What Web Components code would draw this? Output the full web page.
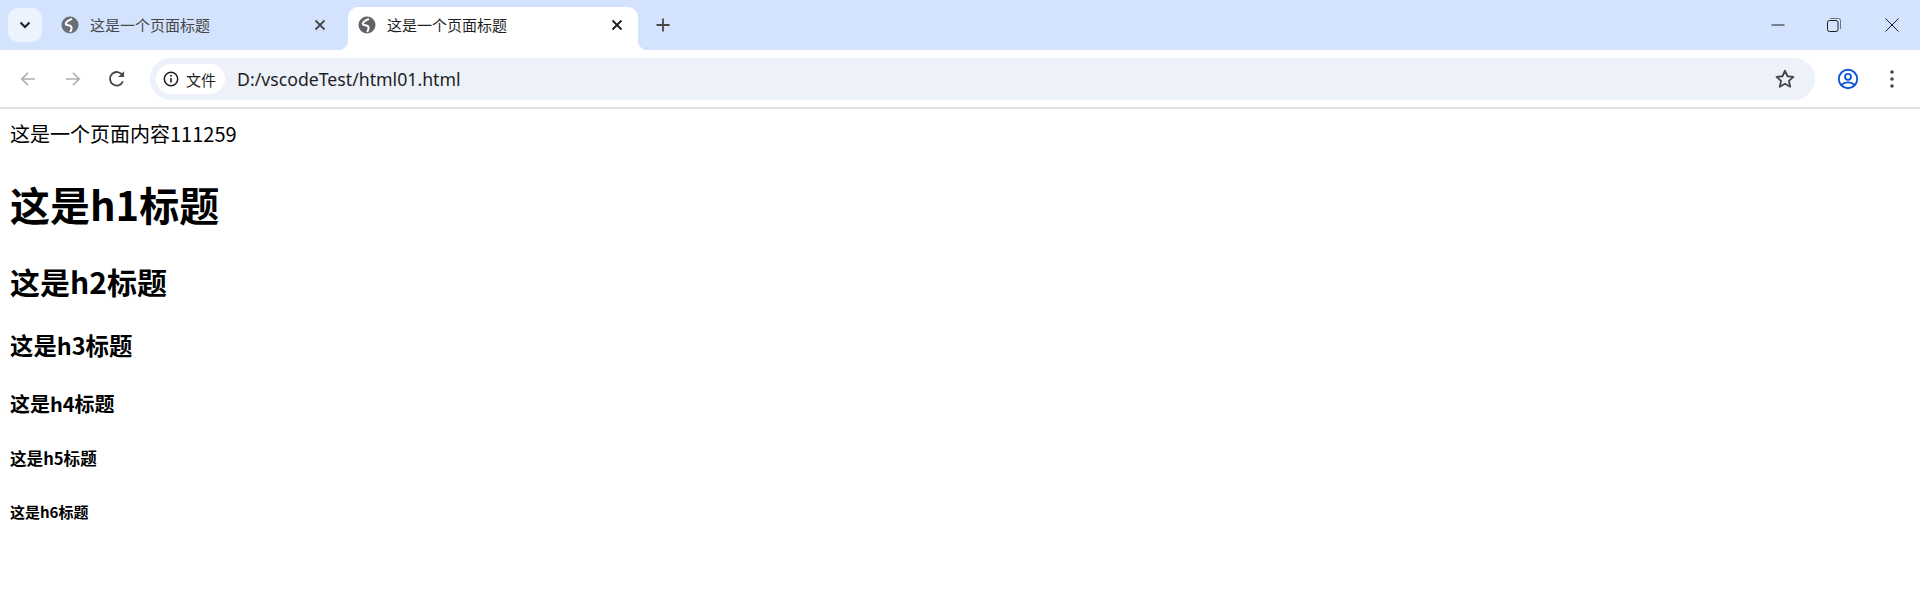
<!DOCTYPE html>
<html lang="zh">
<head>
<meta charset="utf-8">
<title>这是一个页面标题</title>
<style>
  html, body { margin: 0; height: 100%; background: #fff; overflow: hidden; }
  body { font-family: "Noto Sans CJK SC", "Noto Sans", sans-serif; }
</style>
</head>
<body>
<browser-window>
  <tab-strip>
    <browser-tab>这是一个页面标题</browser-tab>
    <browser-tab active>这是一个页面标题</browser-tab>
  </tab-strip>
  <nav-toolbar url="D:/vscodeTest/html01.html"></nav-toolbar>
  <page-view>
    <text-line>这是一个页面内容111259</text-line>
    <page-heading level="1">这是h1标题</page-heading>
    <page-heading level="2">这是h2标题</page-heading>
    <page-heading level="3">这是h3标题</page-heading>
    <page-heading level="4">这是h4标题</page-heading>
    <page-heading level="5">这是h5标题</page-heading>
    <page-heading level="6">这是h6标题</page-heading>
  </page-view>
</browser-window>

<script>
const GLOBE = `<svg width="18" height="18" viewBox="0 0 18 18"><circle cx="9" cy="9" r="8.500" fill="currentColor"/><path d="M11 2.800C8.500 4 5.500 5 4.800 7.300 4.300 9.300 7 9 9.500 10c2 1 1 4-.5 6" fill="none" stroke="#fff" stroke-width="2"/></svg>`;

class BrowserWindow extends HTMLElement {
  constructor() {
    super();
    this.attachShadow({ mode: "open" });
    this.shadowRoot.innerHTML = `
      <style>
        :host { display: flex; flex-direction: column; height: 606px; background: #fff; }
      </style>
      <slot></slot>`;
  }
}

class TabStrip extends HTMLElement {
  constructor() {
    super();
    this.attachShadow({ mode: "open" });
    this.shadowRoot.innerHTML = `
      <style>
        :host { display: flex; align-items: flex-end; height: 50px; background: #d3e3fd; color: #1f1f1f; flex: none; }
        .search { flex: none; width: 34px; height: 34px; margin: 0 0 8px 8px; border-radius: 10px; background: #ecf2fe; display: flex; align-items: center; justify-content: center; }
        .tabs { display: flex; align-items: flex-end; }
        .new { flex: none; width: 28px; height: 28px; margin: 0 0 11px 10.500px; display: flex; align-items: center; justify-content: center; }
        .spacer { flex: 1; }
        .ctl { flex: none; width: 56px; height: 50px; display: flex; align-items: center; justify-content: center; padding-bottom: 1px; box-sizing: border-box; }
        .ctls { display: flex; margin-right: .5px; }
        .ctls .ctl:last-child { margin-left: 2px; }
      </style>
      <div class="search">
        <svg width="12" height="8" viewBox="0 0 12 8"><path d="M1.500 1.500 6 6l4.500-4.500" fill="none" stroke="#1f1f1f" stroke-width="2"/></svg>
      </div>
      <div class="tabs"><slot></slot></div>
      <div class="new">
        <svg width="14" height="14" viewBox="0 0 14 14"><path d="M7 .5v13M.5 7h13" stroke="#474747" stroke-width="1.800"/></svg>
      </div>
      <div class="spacer"></div>
      <div class="ctls">
        <div class="ctl"><svg width="14" height="2" viewBox="0 0 14 2"><path d="M.5 1h13" stroke="#1f1f1f" stroke-width="1"/></svg></div>
        <div class="ctl"><svg width="14" height="14" viewBox="0 0 14 14"><rect x=".5" y="2.500" width="10.500" height="11" rx="2" fill="none" stroke="#1f1f1f"/><path d="M3 .5h8.500a2 2 0 0 1 2 2V11" fill="none" stroke="#6b7280"/></svg></div>
        <div class="ctl"><svg width="14" height="14" viewBox="0 0 14 14"><path d="M.5.5l13 13M13.500.5l-13 13" stroke="#1f1f1f" stroke-width="1"/></svg></div>
      </div>`;
  }
}

class BrowserTab extends HTMLElement {
  constructor() {
    super();
    this.attachShadow({ mode: "open" });
    this.shadowRoot.innerHTML = `
      <style>
        :host { display: flex; align-items: center; position: relative; width: 298px; height: 43px; padding: 0 14px 7px 19px; box-sizing: border-box; font-size: 15px; color: #474747; }
        :host([active]) { background: #fff; color: #1f1f1f; border-radius: 10px 10px 0 0; width: 290px; margin-left: 8px; padding: 0 15px 7px 10px; }
        .fav { flex: none; display: flex; color: #6a6f76; margin-right: 11px; }
        :host([active]) .fav { color: #5f6368; }
        .title { flex: 1; white-space: nowrap; overflow: hidden; line-height: 20px; }
        .close { flex: none; display: flex; }
        .curve { display: none; position: absolute; bottom: 0; width: 10px; height: 10px; }
        :host([active]) .curve { display: block; }
        .curve.l { left: -10px; background: radial-gradient(circle at 0 0, transparent 10px, #fff 10.500px); }
        .curve.r { right: -10px; background: radial-gradient(circle at 100% 0, transparent 10px, #fff 10.500px); }
      </style>
      <span class="fav">${GLOBE}</span>
      <span class="title"><slot></slot></span>
      <span class="close"><svg width="12" height="12" viewBox="0 0 12 12"><path d="M1.500 1.500l9 9M10.500 1.500l-9 9" stroke="currentColor" stroke-width="1.800"/></svg></span>
      <i class="curve l"></i><i class="curve r"></i>`;
  }
}

class NavToolbar extends HTMLElement {
  constructor() {
    super();
    this.attachShadow({ mode: "open" });
  }

  connectedCallback() {
    const url = this.getAttribute("url");
    this.shadowRoot.innerHTML = `
      <style>
        :host { display: flex; align-items: center; flex: none; height: 58px; background: #fff; border-radius: 10px 10px 0 0; box-sizing: border-box; padding: 0 0 1px 0; position: relative; }
        :host::before { content: ""; position: absolute; z-index: -1; inset: 0 0 50% 0; background: #d3e3fd; }
        :host::after { content: ""; position: absolute; left: 0; right: 0; bottom: -1px; height: 2px; background: #e1e1e1; }
        .btn { flex: none; width: 44.500px; height: 36px; display: flex; align-items: center; justify-content: center; }
        .navs { display: flex; margin-left: 6px; margin-right: 10.500px; }
        .omni { flex: 1; height: 42px; margin: 1px 0 0 0; background: #ecf1fa; border-radius: 21px; display: flex; align-items: center; padding: 0 19px 0 6px; box-sizing: border-box; min-width: 0; }
        .chip { flex: none; display: flex; align-items: center; height: 30px; background: #fff; border-radius: 15px; padding: 0 9px 0 6px; box-sizing: border-box; font-size: 15px; color: #1f1f1f; }
        .chip svg { margin-right: 6px; }
        .url { flex: 1; margin-left: 12px; font-family: "Noto Sans", sans-serif; font-size: 17.700px; color: #1f1f1f; white-space: nowrap; }
        .tools { display: flex; align-items: center; margin-left: 8px; margin-right: 9px; }
        .tools .btn { width: 50px; }
        .tools .btn:last-child { width: 38px; }
      </style>
      <div class="navs">
        <div class="btn"><svg width="16" height="16" viewBox="0 0 16 16"><path d="M15 8H2M8 1.800 1.800 8 8 14.200" fill="none" stroke="#aeb0b3" stroke-width="1.700"/></svg></div>
        <div class="btn"><svg width="16" height="16" viewBox="0 0 16 16"><path d="M1 8h13M8 1.800 14.200 8 8 14.200" fill="none" stroke="#aeb0b3" stroke-width="1.700"/></svg></div>
        <div class="btn"><svg width="18" height="18" viewBox="0 0 16 16"><path d="M13.300 10.200A6 6 0 1 1 13 4.800" fill="none" stroke="#474747" stroke-width="1.600"/><path d="M14.300 1v5.300H9z" fill="#474747"/></svg></div>
      </div>
      <div class="omni">
        <div class="chip">
          <svg width="18" height="18" viewBox="0 0 18 18"><circle cx="9" cy="9" r="6.700" fill="none" stroke="#1f1f1f" stroke-width="1.500"/><path d="M9 8v4.500" stroke="#1f1f1f" stroke-width="1.600"/><circle cx="9" cy="5.800" r="1" fill="#1f1f1f"/></svg>
          <span>文件</span>
        </div>
        <span class="url">${url}</span>
        <svg width="22" height="22" viewBox="0 0 20 20"><path d="M10 2.500l2.300 5 5.300.6-4 3.600 1.100 5.300-4.700-2.700-4.700 2.700 1.100-5.300-4-3.600 5.300-.6z" fill="none" stroke="#474747" stroke-width="1.700" stroke-linejoin="round"/></svg>
      </div>
      <div class="tools">
        <div class="btn"><svg width="22" height="22" viewBox="0 0 22 22"><circle cx="11" cy="11" r="9.200" fill="none" stroke="#0b57d0" stroke-width="1.900"/><circle cx="11" cy="8.800" r="3" fill="none" stroke="#0b57d0" stroke-width="1.800"/><path d="M4.800 16.800c1.500-1.700 3.700-2.500 6.200-2.500s4.700.8 6.200 2.500" fill="none" stroke="#0b57d0" stroke-width="1.800"/></svg></div>
        <div class="btn"><svg width="4" height="18" viewBox="0 0 4 18"><circle cx="2" cy="2" r="1.800" fill="#474747"/><circle cx="2" cy="9" r="1.800" fill="#474747"/><circle cx="2" cy="16" r="1.800" fill="#474747"/></svg></div>
      </div>`;
  }
}

class PageView extends HTMLElement {
  constructor() {
    super();
    this.attachShadow({ mode: "open" });
    this.shadowRoot.innerHTML = `
      <style>
        :host { display: block; flex: 1; padding: 11px 10px 8px; color: #000; font-size: 20px; line-height: 29px; }
      </style>
      <slot></slot>`;
  }
}

class TextLine extends HTMLElement {
  constructor() {
    super();
    this.attachShadow({ mode: "open" });
    this.shadowRoot.innerHTML = `
      <style>:host { display: block; }</style>
      <slot></slot>`;
  }
}

class PageHeading extends HTMLElement {
  constructor() {
    super();
    this.attachShadow({ mode: "open" });
  }

  connectedCallback() {
    const sizes = { 1: [40, 58, 27], 2: [30, 43, 27], 3: [23.4, 34, 24.5], 4: [20, 29, 27], 5: [16.6, 24, 28], 6: [15, 19, 32] };
    const [size, line, top] = sizes[this.getAttribute("level")];
    this.shadowRoot.innerHTML = `
      <style>
        :host { display: block; font-weight: 700; font-size: ${size}px; line-height: ${line}px; margin-top: ${top}px; }
      </style>
      <slot></slot>`;
  }
}

customElements.define("browser-window", BrowserWindow);
customElements.define("tab-strip", TabStrip);
customElements.define("browser-tab", BrowserTab);
customElements.define("nav-toolbar", NavToolbar);
customElements.define("page-view", PageView);
customElements.define("text-line", TextLine);
customElements.define("page-heading", PageHeading);
</script>
</body>
</html>
